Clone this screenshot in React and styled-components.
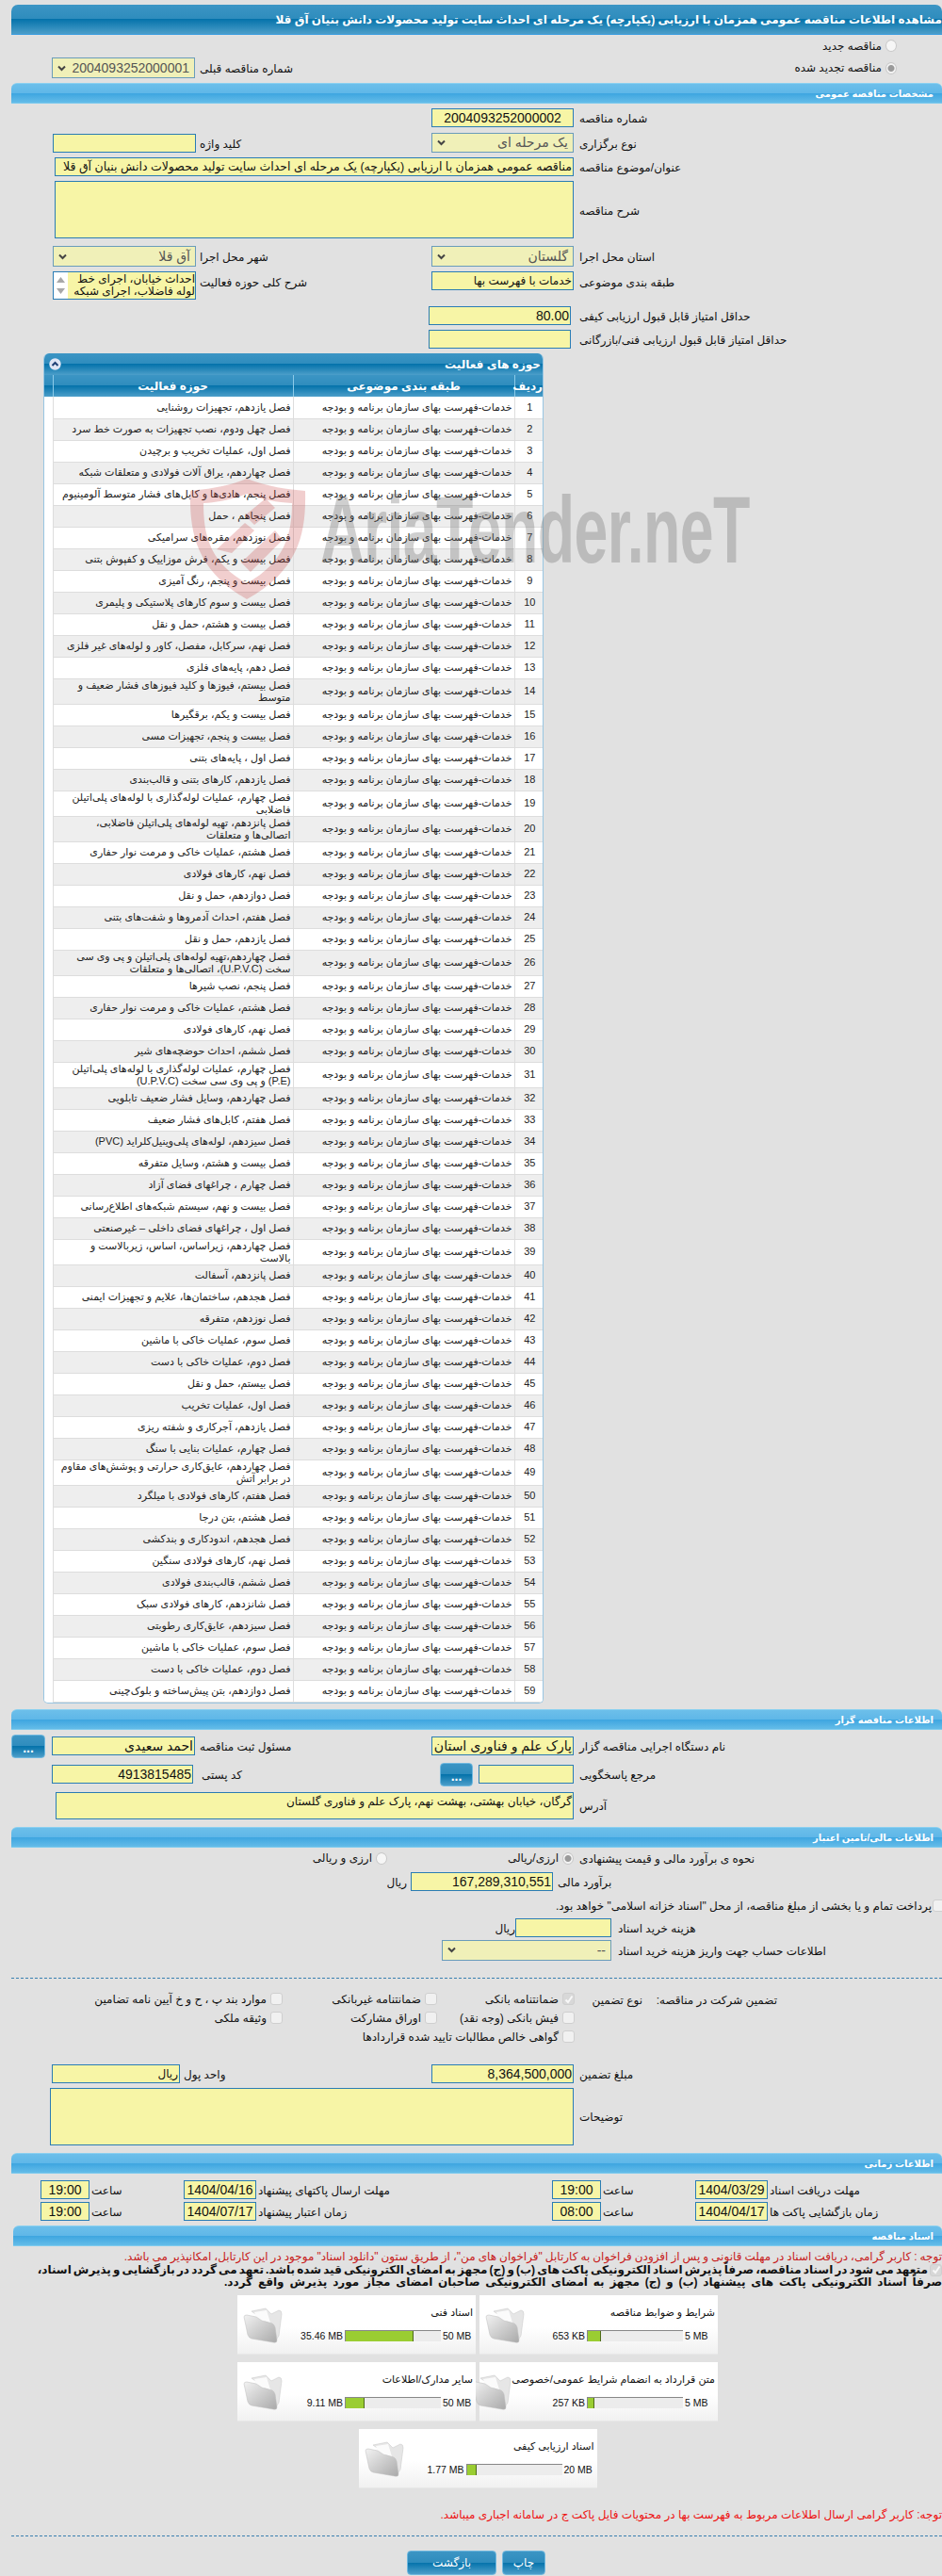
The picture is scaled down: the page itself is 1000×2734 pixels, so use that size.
import React from "react";
import styled, { createGlobalStyle, css } from "styled-components";

const FONT = `"Liberation Sans", "DejaVu Sans", sans-serif`;
const DARK_GRAD = `linear-gradient(to bottom, #3c95c4 0%, #2e8cbd 49%, #0573ab 50%, #4c9ec9 100%)`;
const LIGHT_GRAD = `linear-gradient(to bottom, #6cbfea 0%, #5fb7e8 49%, #3da5e0 50%, #64bce8 100%)`;

const Global = createGlobalStyle`
  html, body { margin: 0; padding: 0; background: #e1e1e1; overflow-x: hidden; }
  body { font-family: ${FONT}; font-size: 12px; color: #111; }
  * { box-sizing: border-box; }
`;

const Page = styled.div`
  position: relative; width: 1000px; height: 2734px; padding: 5px 0 0 12px; direction: rtl; overflow: hidden;
`;
const TitleBar = styled.h1`
  margin: 0; height: 32px; width: 988px; border-radius: 7px 7px 0 0; background: ${DARK_GRAD};
  border-bottom: 1px solid #3a9de0; color: #fff; font: bold 12px/32px ${FONT}; white-space: nowrap; overflow: hidden;
`;
const SectionBar = styled.h2`
  margin: ${p => p.$mt || 0}px 0 0; height: 22px; width: ${p => p.$w || 988}px; border-radius: 6px 6px 0 0; background: ${LIGHT_GRAD};
  border-top: 1px solid #8ad0f0; border-bottom: 1px solid #7fcbee;
  color: #fff; font: bold 10px/21px ${FONT}; padding-right: 9px;
`;
const Row = styled.div`
  display: flex; align-items: ${p => p.$align || "center"}; margin-top: ${p => p.$mt || 0}px; height: ${p => p.$h}px;
`;
const RightCell = styled.div`
  display: flex; align-items: inherit; flex: none; width: 542px;
`;
const LeftCell = styled.div`
  display: flex; align-items: inherit; flex: 1;
`;
const Label = styled.label`
  flex: none; display: block; width: ${p => p.$w}px; margin-left: ${p => p.$gap ?? 6}px; text-align: left;
  white-space: nowrap; font-size: 12px; line-height: 20px; padding-top: 2px; color: #111;
`;
const fieldBase = css`
  flex: none; width: ${p => p.$w || 151}px; height: ${p => p.$h || 20}px; border: 1px solid #2a7cb4; background: #f7f5a6;
  font-size: 14px; line-height: ${p => (p.$h || 20) - 2}px; white-space: nowrap; overflow: hidden; color: #111;
`;
const Field = styled.div`
  ${fieldBase}
  direction: rtl; padding: 0 ${p => p.$pad ?? 1}px;
  text-align: ${p => p.$center ? "center" : "right"};
  font-size: ${p => p.$fs || 14}px;
`;
const TextBlock = styled.div`
  ${fieldBase}
  font-size: 12px; line-height: 15px; white-space: normal; padding: 2px 1px;
`;
const SelectBox = styled.div`
  ${fieldBase}
  display: flex; align-items: center; justify-content: space-between; border-color: #6a9cba; background: #f0f0b8; color: #555;
  font-size: ${p => p.$fs || 14}px; padding: 0 5px; direction: rtl;
`;
const Chevron = () => (
  <svg width="9" height="7" viewBox="0 0 9 7" style={{ flex: "none" }}><path d="M1 1.5 L4.5 5 L8 1.5" fill="none" stroke="#444" strokeWidth="2" /></svg>
);
const ListBox = styled.div`
  ${fieldBase}
  display: flex; font-size: 12px; line-height: 13px; padding: 0;
`;
const ListText = styled.div`
  flex: 1; overflow: hidden; padding-top: 1px;
`;
const ScrollTrack = styled.div`
  flex: none; width: 15px; background: #fff; display: flex; flex-direction: column; justify-content: space-between; align-items: center; padding: 5px 0;
`;
const Tri = ({ down }) => (
  <svg width="9" height="6" viewBox="0 0 9 6"><path d={down ? "M0 0 H9 L4.5 6 Z" : "M0 6 H9 L4.5 0 Z"} fill="#a8a8a8" /></svg>
);
const DotsButton = styled.button`
  flex: none; width: ${p => p.$w || 36}px; height: 25px; margin-right: ${p => p.$mr || 0}px; padding: 4px 0 0; border: 1px solid #6fb8df; border-radius: 4px; background: ${DARK_GRAD};
  color: #fff; font: bold 14px/16px "Liberation Sans", sans-serif; display: flex; align-items: center; justify-content: center;
`;
const RadioDot = styled.span`
  flex: none; display: inline-block; width: 12px; height: 13px; border: 1px solid #c8c8c8; border-radius: 50%; background: ${p => p.$on ? "radial-gradient(circle, #9a9a9a 0 3px, #f3f3f3 4px)" : "#f6f6f6"};
`;
const CheckBoxShape = styled.span`
  flex: none; display: inline-flex; align-items: center; justify-content: center; vertical-align: middle; width: 13px; height: 13px; border: 1px solid #cfcfcf; border-radius: 3px; background: ${p => p.$on ? "#d8d8d8" : "#f1f1f1"};
`;
const CheckBox = ({ on }) => (
  <CheckBoxShape $on={on}>{on && <svg width="10" height="10" viewBox="0 0 10 10"><path d="M1.5 5.5 L4 8 L8.5 1.5" fill="none" stroke="#f8f8f8" strokeWidth="2" /></svg>}</CheckBoxShape>
);
const Option = styled.div`
  display: flex; align-items: center; flex: none; width: ${p => p.$w ? p.$w + "px" : "auto"}; margin-right: ${p => p.$mr || 0}px; gap: 4px; white-space: nowrap; font-size: 12px;
`;
const Unit = styled.span`
  flex: none; margin-right: ${p => p.$mr || 0}px; font-size: 12px; padding-top: 2px;
`;
const Plain = styled.div`
  white-space: nowrap; font-size: 12px; padding-top: 2px; margin-right: ${p => p.$mr || 0}px;
`;
const EdgeCheck = styled.span`
  display: flex; margin-right: -3px;
`;
const Divider = styled.hr`
  margin: ${p => p.$mt}px 0 0; width: 988px; height: 0; border: 0; border-top: 1px dashed #3a80b0;
`;
const GuaranteeRow = styled.div`
  display: flex; margin-top: 15px; height: 60px;
`;
const GuaranteeHead = styled.div`
  flex: none; white-space: nowrap; width: ${p => p.$w}px; margin-right: ${p => p.$mr}px; height: 20px; line-height: 17px; text-align: left;
`;
const GuaranteeGrid = styled.div`
  display: grid; grid-template-columns: 146px 164px 200px; grid-auto-rows: 20px; margin-right: ${p => p.$mr}px;
  align-items: start;
`;
const Wide = styled.div`
  grid-column: span 3;
`;

/* Table panel */
const Panel = styled.section`
  margin: 5px 423px 0 0; width: 531px; border: 1px solid #98c6e2; border-top: 0; border-radius: 6px 6px 5px 5px; background: #fff; overflow: hidden;
`;
const PanelHead = styled.div`
  height: 23px; display: flex; justify-content: space-between; align-items: center; background: ${DARK_GRAD}; color: #fff; font: bold 12px ${FONT}; padding: 0 2px 0 5px;
`;
const Table = styled.table`
  width: 530px; table-layout: fixed; border-collapse: collapse; font-size: 11px; direction: rtl;
`;
const Th = styled.th`
  height: 23px; width: ${p => p.$w}px; padding: 0; background: ${DARK_GRAD}; color: #fff; font: bold 12px ${FONT}; border-left: 1px solid #8ccbe9;
  &:last-child { border-left: 0; }
`;
const Tr = styled.tr`
  height: ${p => p.$tall ? 27 : 23}px;
`;
const Td = styled.td`
  padding: 0 2px 0 4px; border-bottom: 1px solid #ddd; border-left: 1px solid #ddd; text-align: ${p => p.$center ? "center" : "right"};
  background: ${p => p.$alt ? "#eee" : "#fff"}; line-height: 13px; white-space: nowrap; font-size: 11px; color: #222;
`;
const BlankTd = styled.td`
  padding: 0; background: #fff;
`;

/* Notes */
const NoteRed = styled.p`
  margin: ${p => p.$mt}px 0 0; color: ${p => p.$c}; font-size: 12px; line-height: 14px; white-space: nowrap; word-spacing: ${p => p.$ws || 0}px;
`;
const Commit = styled.div`
  margin-top: 1px; height: 29px; font-weight: bold; font-size: 12px; line-height: 13px; white-space: nowrap; color: #111; overflow: visible;
`;
const CommitLine = styled.span`
  display: block; word-spacing: ${p => p.$ws}px;
`;

/* Doc cards */
const Cards = styled.div`
  display: flex; flex-wrap: wrap; justify-content: center; gap: 8px 4px; width: 510px; margin: 4px 238px 0 0;
`;
const Card = styled.article`
  width: 253px; height: 63px; display: flex; background: linear-gradient(to bottom, #fff 55%, #f1f1f1 100%); border-bottom: 1px solid #e8e8e8;
`;
const CardMain = styled.div`
  flex: 1; padding: 10px 3px 0 0;
`;
const CardTitle = styled.div`
  font-size: 11px; line-height: 16px; height: 16px; white-space: nowrap; color: #111;
`;
const Progress = styled.div`
  direction: ltr; display: flex; justify-content: flex-end; align-items: center; margin-top: 11px; font-size: 10.5px; height: 12px; padding-right: 2px; white-space: nowrap;
`;
const Track = styled.div`
  flex: none; width: 102px; height: 12px; margin: 0 2px; background: #ececec; border-top: 1px solid #888; border-left: 1px solid #888;
`;
const Fill = styled.div`
  height: 100%; background: #9acd32; border-right: 1px solid #4d6b1a;
`;
const MaxText = styled.span`
  flex: none; width: 30px; text-align: left; white-space: nowrap;
`;
const FolderWrap = styled.div`
  flex: none; width: 48px; padding: 13px 0 0 4px;
`;
const Folder = () => (
  <svg width="42" height="38" viewBox="0 0 42 38">
    <defs>
      <linearGradient id="fg" x1="0" y1="0" x2="1" y2="1"><stop offset="0" stopColor="#f2f2f2" /><stop offset="1" stopColor="#a9a9a9" /></linearGradient>
    </defs>
    <path d="M9 4 L24 1 L30 7 L38 3 Q41 3 41 7 L38 30 L34 36 L28 18 Z" fill="#e6e6e6" stroke="#ccc" strokeWidth=".6" />
    <path d="M12 5 L25 3 L29 16 L14 12 Z" fill="#fbfbfb" />
    <path d="M1 10 Q1 8 4 8 L14 10 L20 14 L31 17 Q33 18 34 21 L36 35 Q36 38 32 37 L9 33 Q6 32 5 29 Z" fill="url(#fg)" stroke="#bdbdbd" strokeWidth=".5" />
  </svg>
);

/* Footer buttons */
const Buttons = styled.div`
  display: flex; gap: 6px; margin: 15px 421px 0 0;
`;
const ActionButton = styled.button`
  width: ${p => p.$w}px; height: 26px; padding: 0; border: 1px solid #6fb8df; border-radius: 4px; background: ${DARK_GRAD}; color: #fff; font: 12px ${FONT};
`;

/* Watermark overlay */
const Watermark = styled.div`
  position: absolute; left: 200px; top: 505px; width: 610px; height: 135px; pointer-events: none; direction: ltr;
`;
const WatermarkShield = styled.svg`
  position: absolute; left: 0; top: 0;
`;
const WatermarkText = styled.span`
  position: absolute; left: 140px; top: 7px; font: bold 100px/100px "Liberation Sans", sans-serif; color: rgba(110,110,110,.33); white-space: nowrap;
  transform-origin: 0 0; transform: scaleX(.645); letter-spacing: -1px;
`;

const C = "خدمات-فهرست بهای سازمان برنامه و بودجه";
const ROWS = [
  ["فصل یازدهم، تجهیزات روشنایی"], ["فصل چهل ودوم، نصب تجهیزات به صورت خط سرد"], ["فصل اول، عملیات تخریب و برچیدن"],
  ["فصل چهاردهم، یراق آلات فولادی و متعلقات شبکه"], ["فصل پنجم، هادی‌ها و کابل‌های فشار متوسط آلومینیوم"], ["فصل پنجاهم ، حمل"],
  ["فصل نوزدهم، مقره‌های سرامیکی"], ["فصل بیست و یکم، فرش موزاییک و کفپوش بتنی"], ["فصل بیست و پنجم، رنگ آمیزی"],
  ["فصل بیست و سوم کارهای پلاستیکی و پلیمری"], ["فصل بیست و هشتم، حمل و نقل"], ["فصل نهم، سرکابل، مفصل، کاور و لوله‌های غیر فلزی"],
  ["فصل دهم، پایه‌های فلزی"], ["فصل بیستم، فیوزها و کلید فیوزهای فشار ضعیف و", "متوسط"], ["فصل بیست و یکم، برقگیرها"],
  ["فصل بیست و پنجم، تجهیزات مسی"], ["فصل اول ، پایه‌های بتنی"], ["فصل یازدهم، کارهای بتنی و قالب‌بندی"],
  ["فصل چهارم، عملیات لوله‌گذاری با لوله‌های پلی‌اتیلن", "فاضلابی"], ["فصل پانزدهم، تهیه لوله‌های پلی‌اتیلن فاضلابی،", "اتصالی‌ها و متعلقات"], ["فصل هشتم، عملیات خاکی و مرمت نوار حفاری"],
  ["فصل نهم، کارهای فولادی"], ["فصل دوازدهم، حمل و نقل"], ["فصل هفتم، احداث آدمروها و شفت‌های بتنی"],
  ["فصل یازدهم، حمل و نقل"], ["فصل چهاردهم،تهیه لوله‌های پلی‌اتیلن و پی وی سی", "سخت (U.P.V.C)، اتصالی‌ها و متعلقات"], ["فصل پنجم، نصب شیرها"],
  ["فصل هشتم، عملیات خاکی و مرمت نوار حفاری"], ["فصل نهم، کارهای فولادی"], ["فصل ششم، احداث حوضچه‌های شیر"],
  ["فصل چهارم، عملیات لوله‌گذاری با لوله‌های پلی‌اتیلن", "(P.E) و پی وی سی سخت (U.P.V.C)"], ["فصل چهاردهم، وسایل فشار ضعیف تابلویی"], ["فصل هفتم، کابل‌های فشار ضعیف"],
  ["فصل سیزدهم، لوله‌های پلی‌وینیل‌کلراید (PVC)"], ["فصل بیست و هشتم، وسایل متفرقه"], ["فصل چهارم ، چراغهای فضای آزاد"],
  ["فصل بیست و نهم، سیستم شبکه‌های اطلاع‌رسانی"], ["فصل اول ، چراغهای فضای داخلی – غیرصنعتی"], ["فصل چهاردهم، زیراساس، اساس، زیربالاست  و", "بالاست"],
  ["فصل پانزدهم، آسفالت"], ["فصل هجدهم، ساختمان‌ها، علایم و تجهیزات ایمنی"], ["فصل نوزدهم، متفرقه"],
  ["فصل سوم، عملیات خاکی با ماشین"], ["فصل دوم، عملیات خاکی با دست"], ["فصل بیستم، حمل و نقل"],
  ["فصل اول، عملیات تخریب"], ["فصل یازدهم، آجرکاری و شفته ریزی"], ["فصل چهارم، عملیات بنایی با سنگ"],
  ["فصل چهاردهم، عایق‌کاری حرارتی و پوشش‌های مقاوم", "در برابر آتش"], ["فصل هفتم، کارهای فولادی با میلگرد"], ["فصل هشتم، بتن درجا"],
  ["فصل هجدهم، اندودکاری و بندکشی"], ["فصل نهم، کارهای فولادی سنگین"], ["فصل ششم، قالب‌بندی فولادی"],
  ["فصل شانزدهم، کارهای فولادی سبک"], ["فصل سیزدهم، عایق‌کاری رطوبتی"], ["فصل سوم، عملیات خاکی با ماشین"],
  ["فصل دوم، عملیات خاکی با دست"], ["فصل دوازدهم، بتن پیش‌ساخته و بلوک‌چینی"],
];

const DOCS = [
  ["شرایط و ضوابط مناقصه", "653 KB", 14, "5 MB"], ["اسناد فنی", "35.46 MB", 71, "50 MB"],
  ["متن قرارداد به انضمام شرایط عمومی/خصوصی", "257 KB", 7, "5 MB"], ["سایر مدارک/اطلاعات", "9.11 MB", 20, "50 MB"],
  ["اسناد ارزیابی کیفی", "1.77 MB", 10, "20 MB"],
];

export default function App() {
  return (
    <Page>
      <Global />
      <TitleBar>مشاهده اطلاعات مناقصه عمومی همزمان با ارزیابی (یکپارچه) یک مرحله ای احداث سایت تولید محصولات دانش بنیان آق قلا</TitleBar>

      <Row $mt={5} $h={13}><Option $mr={48}><RadioDot /><span>مناقصه جدید</span></Option></Row>
      <Row $mt={6} $h={22}>
        <RightCell><Option $mr={48}><RadioDot $on /><span>مناقصه تجدید شده</span></Option></RightCell>
        <LeftCell><Label $w={246} $gap={5}>شماره مناقصه قبلی</Label><SelectBox $h={22} $w={152}><span>2004093252000001</span><Chevron /></SelectBox></LeftCell>
      </Row>

      <SectionBar $mt={5}>مشخصات مناقصه عمومی</SectionBar>
      <Row $mt={5} $h={20}><RightCell><Label $w={385}>شماره مناقصه</Label><Field $center>2004093252000002</Field></RightCell></Row>
      <Row $mt={6} $h={21}>
        <RightCell><Label $w={385}>نوع برگزاری</Label><SelectBox $h={21}><span>یک مرحله ای</span><Chevron /></SelectBox></RightCell>
        <LeftCell><Label $w={246} $gap={4}>کلید واژه</Label><Field $w={152} /></LeftCell>
      </Row>
      <Row $mt={5} $h={20}><Label $w={385}>عنوان/موضوع مناقصه</Label><Field $w={551} $fs={12.5}>مناقصه عمومی همزمان با ارزیابی (یکپارچه) یک مرحله ای احداث سایت تولید محصولات دانش بنیان آق قلا</Field></Row>
      <Row $mt={5} $h={61}><Label $w={385}>شرح مناقصه</Label><TextBlock $w={551} $h={61} /></Row>
      <Row $mt={8} $h={22}>
        <RightCell><Label $w={385}>استان محل اجرا</Label><SelectBox $h={22}><span>گلستان</span><Chevron /></SelectBox></RightCell>
        <LeftCell><Label $w={246} $gap={4}>شهر محل اجرا</Label><SelectBox $h={22} $w={152}><span>آق قلا</span><Chevron /></SelectBox></LeftCell>
      </Row>
      <Row $mt={5} $h={30} $align="flex-start">
        <RightCell><Label $w={385}>طبقه بندی موضوعی</Label><Field $fs={12}>خدمات با فهرست بها</Field></RightCell>
        <LeftCell><Label $w={246} $gap={4}>شرح کلی حوزه فعالیت</Label>
          <ListBox $w={152} $h={30}><ListText>احداث خیابان، اجرای خط<br />لوله فاضلاب، اجرای شبکه</ListText><ScrollTrack><Tri /><Tri down /></ScrollTrack></ListBox>
        </LeftCell>
      </Row>
      <Row $mt={7} $h={20}><Label $w={385} $gap={9}>حداقل امتیاز قابل قبول ارزیابی کیفی</Label><Field $pad={1}>80.00</Field></Row>
      <Row $mt={5} $h={20}><Label $w={385} $gap={9}>حداقل امتیاز قابل قبول ارزیابی فنی/بازرگانی</Label><Field /></Row>

      <Panel>
        <PanelHead>
          <span>حوزه های فعالیت</span>
          <svg width="13" height="13" viewBox="0 0 13 13"><circle cx="6.5" cy="6.5" r="6.2" fill="#dfe5f5" /><path d="M3.5 8 L6.5 5 L9.5 8" fill="none" stroke="#1e3f74" strokeWidth="2" /></svg>
        </PanelHead>
        <Table>
          <thead><tr><Th $w={30}>ردیف</Th><Th $w={235}>طبقه بندی موضوعی</Th><Th $w={255}>حوزه فعالیت</Th><Th $w={10} /></tr></thead>
          <tbody>
            {ROWS.map((lines, i) => (
              <Tr key={i} $tall={lines.length > 1}>
                <Td $center $alt={i % 2 === 1}>{i + 1}</Td>
                <Td $alt={i % 2 === 1}>{C}</Td>
                <Td $alt={i % 2 === 1}>{lines[0]}{lines[1] && <><br />{lines[1]}</>}</Td>
                <BlankTd />
              </Tr>
            ))}
          </tbody>
        </Table>
      </Panel>

      <SectionBar $mt={6}>اطلاعات مناقصه گزار</SectionBar>
      <Row $mt={5} $h={25}>
        <RightCell><Label $w={385}>نام دستگاه اجرایی مناقصه گزار</Label><Field>پارک علم و فناوری استان گلستان</Field></RightCell>
        <LeftCell><Label $w={246} $gap={5}>مسئول ثبت مناقصه</Label><Field $w={152}>احمد سعیدی</Field><DotsButton $mr={7}>...</DotsButton></LeftCell>
      </Row>
      <Row $mt={5} $h={25}>
        <RightCell><Label $w={385}>مرجع پاسخگویی</Label><Field $w={101} /><DotsButton $w={35} $mr={6}>...</DotsButton></RightCell>
        <LeftCell><Label $w={244} $gap={9}>کد پستی</Label><Field $w={150}>4913815485</Field></LeftCell>
      </Row>
      <Row $mt={6} $h={29}><Label $w={385}>آدرس</Label><TextBlock $w={550} $h={29}>گرگان، خیابان بهشتی، بهشت نهم، پارک علم و فناوری گلستان</TextBlock></Row>

      <SectionBar $mt={8}>اطلاعات مالی/تامین اعتبار</SectionBar>
      <Row $mt={5} $h={13}>
        <Label $w={385}>نحوه ی برآورد مالی و قیمت پیشنهادی</Label>
        <Option $w={198}><RadioDot $on /><span>ارزی/ریالی</span></Option>
        <Option><RadioDot /><span>ارزی و ریالی</span></Option>
      </Row>
      <Row $mt={8} $h={20}><Label $w={408} $gap={5}>برآورد مالی</Label><Field>167,289,310,551</Field><Unit $mr={4}>ریال</Unit></Row>
      <Row $mt={9} $h={13}><EdgeCheck><CheckBox /></EdgeCheck><Plain $mr={1}>پرداخت تمام و یا بخشی از مبلغ مناقصه، از محل "اسناد خزانه اسلامی" خواهد بود.</Plain></Row>
      <Row $mt={7} $h={20}><Label $w={344} $gap={7}>هزینه خرید اسناد</Label><Field $w={102} /><Unit>ریال</Unit></Row>
      <Row $mt={3} $h={22}><Label $w={344} $gap={7}>اطلاعات حساب جهت واریز هزینه خرید اسناد</Label><SelectBox $w={180} $h={22}><span>--</span><Chevron /></SelectBox></Row>
      <Divider $mt={18} />

      <GuaranteeRow>
        <GuaranteeHead $w={126} $mr={175}>تضمین شرکت در مناقصه:</GuaranteeHead>
        <GuaranteeHead $w={52} $mr={17}>نوع تضمین</GuaranteeHead>
        <GuaranteeGrid $mr={20}>
          <Option><CheckBox on />ضمانتنامه بانکی</Option>
          <Option><CheckBox />ضمانتنامه غیربانکی</Option>
          <Option><CheckBox />موارد بند پ ، ح و خ آیین نامه تضامین</Option>
          <Option><CheckBox />فیش بانکی (وجه نقد)</Option>
          <Option><CheckBox />اوراق مشارکت</Option>
          <Option><CheckBox />وثیقه ملکی</Option>
          <Wide><Option><CheckBox />گواهی خالص مطالبات تایید شده قراردادها</Option></Wide>
        </GuaranteeGrid>
      </GuaranteeRow>

      <Row $mt={16} $h={20}>
        <RightCell><Label $w={385}>مبلغ تضمین</Label><Field>8,364,500,000</Field></RightCell>
        <LeftCell><Label $w={263} $gap={4}>واحد پول</Label><Field $w={136} $fs={12}>ریال</Field></LeftCell>
      </Row>
      <Row $mt={5} $h={61}><Label $w={385}>توضیحات</Label><TextBlock $w={556} $h={61} /></Row>

      <SectionBar $mt={8}>اطلاعات زمانی</SectionBar>
      {[
        ["مهلت دریافت اسناد", "1404/03/29", "19:00", "مهلت ارسال پاکتهای پیشنهاد", "1404/04/16", "19:00"],
        ["زمان بازگشایی پاکت ها", "1404/04/17", "08:00", "زمان اعتبار پیشنهاد", "1404/07/17", "19:00"],
      ].map((r, i) => (
        <Row key={i} $mt={i ? 3 : 7} $h={20}>
          <Label $w={183} $gap={2}>{r[0]}</Label><Field $w={77} $center>{r[1]}</Field>
          <Label $w={98} $gap={2}>ساعت</Label><Field $w={52} $center>{r[2]}</Field>
          <Label $w={312} $gap={2}>{r[3]}</Label><Field $w={77} $center>{r[4]}</Field>
          <Label $w={98} $gap={2}>ساعت</Label><Field $w={52} $center>{r[5]}</Field>
        </Row>
      ))}

      <SectionBar $mt={5} $w={986}>اسناد مناقصه</SectionBar>
      <NoteRed $mt={4} $c="#c82020" $ws={-0.3}>توجه : کاربر گرامی، دریافت اسناد در مهلت قانونی و پس از افزودن فراخوان به کارتابل "فراخوان های من"، از طریق ستون "دانلود اسناد" موجود در این کارتابل، امکانپذیر می باشد.</NoteRed>
      <Commit>
        <CommitLine $ws={-1.2}><CheckBox on /> متعهد می شود در اسناد مناقصه، صرفاً پذیرش اسناد الکترونیکی پاکت های (ب) و (ج) مجهز به امضای الکترونیکی قید شده باشد. تعهد می گردد در بازگشایی و پذیرش اسناد،</CommitLine>
        <CommitLine $ws={2.5}>صرفاً اسناد الکترونیکی پاکت های پیشنهاد (ب) و (ج) مجهز به امضای الکترونیکی صاحبان امضای مجاز مورد پذیرش واقع گردد.</CommitLine>
      </Commit>

      <Cards>
        {DOCS.map(([title, val, pct, max]) => (
          <Card key={title}>
            <CardMain>
              <CardTitle>{title}</CardTitle>
              <Progress><span>{val}</span><Track><Fill style={{ width: `${pct}%` }} /></Track><MaxText>{max}</MaxText></Progress>
            </CardMain>
            <FolderWrap><Folder /></FolderWrap>
          </Card>
        ))}
      </Cards>

      <NoteRed $mt={21} $c="#ee1111">توجه: کاربر گرامی ارسال اطلاعات مربوط به فهرست بها در محتویات فایل پاکت ج در سامانه اجباری میباشد.</NoteRed>
      <Divider $mt={15} />
      <Buttons>
        <ActionButton $w={46}>چاپ</ActionButton>
        <ActionButton $w={95}>بازگشت</ActionButton>
      </Buttons>

      <Watermark>
        <WatermarkShield width="126" height="132" viewBox="0 0 126 132">
          <path d="M62 3 C85 12 105 14 124 16 C125 60 118 100 62 131 C8 100 1 60 2 16 C20 14 40 12 62 3 Z M62 19 C44 26 30 28 16 29 C16 62 22 92 62 114 C102 92 110 62 110 29 C94 28 80 26 62 19 Z" fill="rgba(200,60,60,.25)" fillRule="evenodd" />
          <path d="M30 78 L60 50 L70 58 L46 82 Z M60 42 L82 24 L92 34 L70 52 Z M56 92 L92 58 L100 68 L66 102 Z" fill="rgba(200,60,60,.25)" />
        </WatermarkShield>
        <WatermarkText>AriaTender.neT</WatermarkText>
      </Watermark>
    </Page>
  );
}
